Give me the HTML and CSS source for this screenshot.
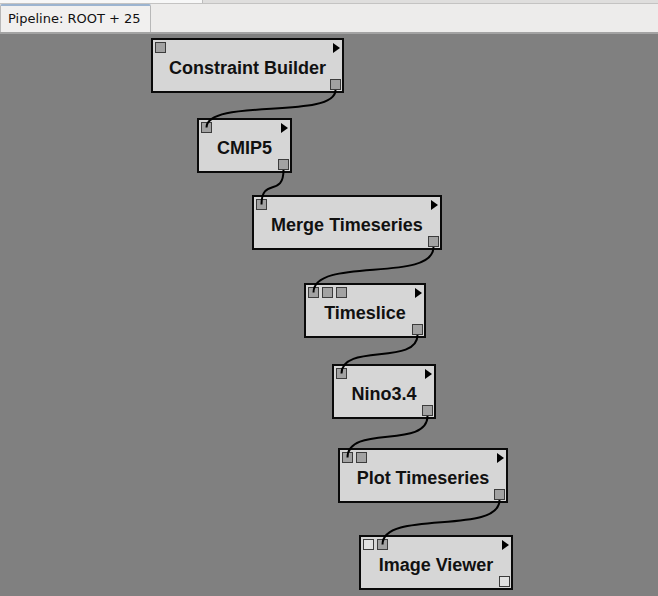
FILE: index.html
```html
<!DOCTYPE html>
<html>
<head>
<meta charset="utf-8">
<link rel="stylesheet" href="styles.css">
</head>
<body>
<div class="app">
  <div class="topstrip"><div class="topstrip-left"></div></div>
  <div class="tabbar">
    <div class="tab">Pipeline: ROOT + 25</div>
  </div>
  <div class="canvas">
    <div class="node" style="left:151px;top:4px;width:193px">
      <div class="ports"><span class="port"></span></div>
      <span class="arrow"></span>
      <div class="title">Constraint Builder</div>
      <span class="port out"></span>
    </div>
    <div class="node" style="left:197px;top:84px;width:95px">
      <div class="ports"><span class="port"></span></div>
      <span class="arrow"></span>
      <div class="title">CMIP5</div>
      <span class="port out"></span>
    </div>
    <div class="node" style="left:252px;top:161px;width:190px">
      <div class="ports"><span class="port"></span></div>
      <span class="arrow"></span>
      <div class="title">Merge Timeseries</div>
      <span class="port out"></span>
    </div>
    <div class="node" style="left:304px;top:249px;width:122px">
      <div class="ports"><span class="port"></span><span class="port"></span><span class="port"></span></div>
      <span class="arrow"></span>
      <div class="title">Timeslice</div>
      <span class="port out"></span>
    </div>
    <div class="node" style="left:332px;top:330px;width:104px">
      <div class="ports"><span class="port"></span></div>
      <span class="arrow"></span>
      <div class="title">Nino3.4</div>
      <span class="port out"></span>
    </div>
    <div class="node" style="left:338px;top:414px;width:170px">
      <div class="ports"><span class="port"></span><span class="port"></span></div>
      <span class="arrow"></span>
      <div class="title">Plot Timeseries</div>
      <span class="port out"></span>
    </div>
    <div class="node" style="left:359px;top:501px;width:154px">
      <div class="ports"><span class="port empty"></span><span class="port"></span></div>
      <span class="arrow"></span>
      <div class="title">Image Viewer</div>
      <span class="port out empty"></span>
    </div>
    <svg class="wires" viewBox="0 34 658 562" width="658" height="562">
      <path d="M335.5 90 C335.5 120 206.5 97.5 206.5 127.5"/>
      <path d="M283.5 170 C283.5 197.6 261.5 176.9 261.5 204.5"/>
      <path d="M433.5 247 C433.5 283.4 313.5 256.1 313.5 292.5"/>
      <path d="M417.5 335 C417.5 365.7 341.5 342.8 341.5 373.5"/>
      <path d="M427.5 416 C427.5 449.2 347.5 424.3 347.5 457.5"/>
      <path d="M499.5 500 C499.5 535.6 382.5 508.9 382.5 544.5"/>
    </svg>
  </div>
</div>
</body>
</html>
```

FILE: styles.css
```css
html, body {
  margin: 0;
  padding: 0;
}
body {
  width: 658px;
  height: 596px;
  overflow: hidden;
  background: #edeceb;
  font-family: "DejaVu Sans", sans-serif;
}
.app {
  display: flex;
  flex-direction: column;
  width: 658px;
  height: 596px;
}
.topstrip {
  height: 3px;
  background: #dfdedd;
  border-bottom: 1px solid #c4c3c2;
  display: flex;
}
.topstrip-left {
  width: 202px;
  background: #f7f7f7;
  border-right: 1px solid #bdbdbd;
}
.tabbar {
  height: 28px;
  background: #edeceb;
  display: flex;
  align-items: flex-end;
  border-bottom: 2px solid #a3a3a3;
}
.tab {
  box-sizing: border-box;
  width: 151px;
  height: 28px;
  background: #f1f0ef;
  border: 1px solid #b8b8b8;
  border-top: 2px solid #9cb4d0;
  border-bottom: none;
  border-radius: 2px 2px 0 0;
  padding: 5px 0 0 7px;
  font-size: 13px;
  color: #111;
  white-space: nowrap;
}
.canvas {
  position: relative;
  flex: 1;
  background: #808080;
  overflow: hidden;
}
.node {
  position: absolute;
  box-sizing: border-box;
  height: 55px;
  background: #d6d6d6;
  border: 2px solid #0a0a0a;
  display: flex;
  align-items: center;
  justify-content: center;
}
.title {
  font-family: "Liberation Sans", Arial, sans-serif;
  font-weight: bold;
  font-size: 18px;
  color: #111;
  padding-top: 5px;
  white-space: nowrap;
}
.ports {
  position: absolute;
  left: 2px;
  top: 2px;
  display: flex;
  gap: 3px;
}
.port {
  display: block;
  box-sizing: border-box;
  width: 11px;
  height: 11px;
  background: #a2a2a2;
  border: 1px solid #3c3c3c;
}
.port.empty {
  background: #e2e2e2;
}
.port.out {
  position: absolute;
  right: 1px;
  bottom: 1px;
}
.arrow {
  position: absolute;
  right: 2px;
  top: 3px;
  width: 0;
  height: 0;
  border-top: 5px solid transparent;
  border-bottom: 5px solid transparent;
  border-left: 7px solid #000;
}
.wires {
  position: absolute;
  left: 0;
  top: 0;
  pointer-events: none;
}
.wires path {
  fill: none;
  stroke: #000;
  stroke-width: 2;
}
```
